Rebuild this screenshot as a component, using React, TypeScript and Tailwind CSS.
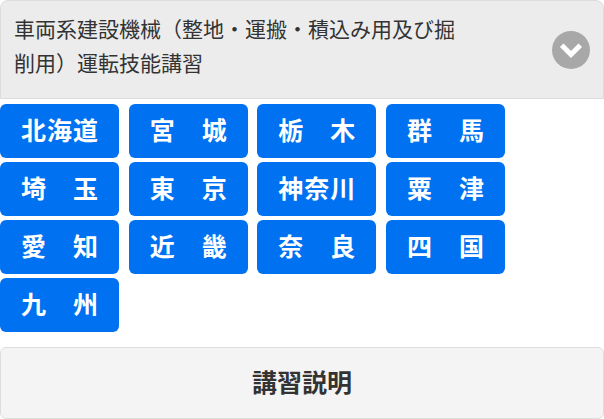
const prefectures = [
  '北海道', '宮　城', '栃　木', '群　馬',
  '埼　玉', '東　京', '神奈川', '粟　津',
  '愛　知', '近　畿', '奈　良', '四　国',
  '九　州',
];

const ChevronCircle = () => (
  <svg width="38" height="38" viewBox="0 0 38 38">
    <circle cx="19" cy="19" r="19" fill="#a8a8a8" />
    <path d="M11.5 16 L19 23.5 L26.5 16" fill="none" stroke="#fff" strokeWidth="5" strokeLinecap="square" />
  </svg>
);

export default function App() {
  return (
    <div className="w-[604px] h-[419px] bg-white font-['Noto_Sans_CJK_JP',sans-serif] overflow-hidden">
      {/* 見出し */}
      <div className="flex items-center h-[99px] bg-[#ececec] border border-[#dcdcdc] rounded-t-[8px] pl-[13px] pr-[13px]">
        <p className="text-[21px] leading-[34px] text-[#333] pb-[10px] whitespace-nowrap">
          車両系建設機械（整地・運搬・積込み用及び掘
          <br />
          削用）運転技能講習
        </p>
        <div className="ml-auto">
          <ChevronCircle />
        </div>
      </div>

      {/* 地域ボタン */}
      <div className="grid grid-cols-[repeat(4,119px)] gap-x-[9.7px] gap-y-[4px] mt-[5px]">
        {prefectures.map((name) => (
          <button
            key={name}
            className="h-[54px] rounded-[6px] bg-[#0071f0] text-white text-[25px] font-bold tracking-[1px] pl-[1px] pb-[4px] leading-none"
          >
            {name}
          </button>
        ))}
      </div>

      <button className="mt-[15px] w-[604px] h-[72px] bg-[#f4f4f4] border border-[#dddddd] rounded-[6px] text-[25px] font-bold text-[#333] pb-[3px]">
        講習説明
      </button>
    </div>
  );
}
